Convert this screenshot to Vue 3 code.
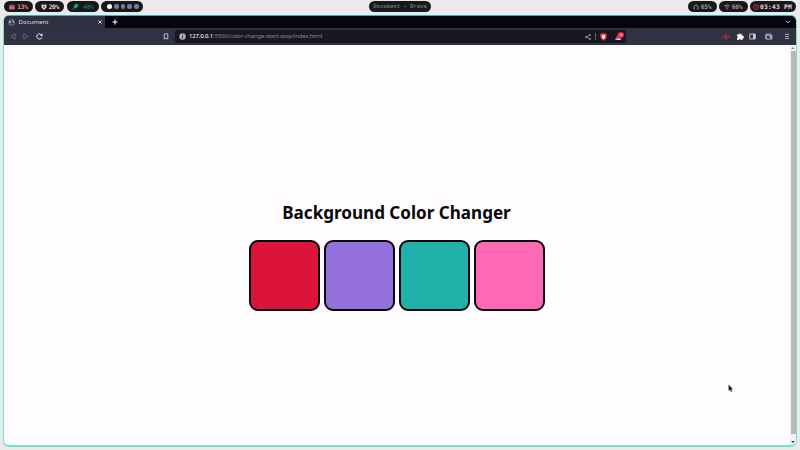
<script setup>
const boxes = ['crimson', 'mediumpurple', 'lightseagreen', 'hotpink']
</script>

<template>
  <div class="desktop">
    <header class="bar">
      <div class="group">
        <div class="pill cpu">
          <svg width="6" height="6" viewBox="0 0 6 6"><path d="M.3.8h5.2v4.4H.3z" fill="#94566c" /><path d="M.3 3l1.7-.8 2 1 1.5-.8v2.8H.3z" fill="#d9667e" /></svg>
          <span>13%</span>
        </div>
        <div class="pill mem">
          <svg width="6" height="6" viewBox="0 0 6 6"><path d="M.5.5h1.7l.8.8.8-.8h1.7v3L3 6 .5 3.5z" fill="#e8cfcb" /><circle cx="3" cy="2.8" r=".9" fill="#493a3c" /></svg>
          <span>20%</span>
        </div>
        <div class="pill power">
          <svg width="7" height="7" viewBox="0 0 7 7"><path d="M.4 6.6L2 5M2 2l3 3M2.5 2.4L4.5.8 6.3 2.6 4.6 4.6 2.6 5 2 4.3z" fill="#179c84" stroke="#179c84" stroke-width=".8" /></svg>
          <span>48%</span>
        </div>
        <div class="pill spaces"><i v-for="n in 5" :key="n" :class="{ on: n === 1 }"></i></div>
      </div>
      <div class="pill title"><span>Document - Brave</span></div>
      <div class="group right">
        <div class="pill vol">
          <svg width="6" height="6" viewBox="0 0 6 6"><path d="M1.9 5H1V3a2 2 0 0 1 4 0v2h-.9" fill="none" stroke="#86a5ae" stroke-width=".9" /></svg>
          <span>65%</span>
        </div>
        <div class="pill wifi">
          <svg width="6" height="6" viewBox="0 0 6 6"><path d="M.3 1.8Q3 0 5.7 1.8M1.4 3.2Q3 2 4.6 3.2" fill="none" stroke="#a78f94" stroke-width=".9" /><circle cx="3" cy="4.8" r=".7" fill="#a78f94" /></svg>
          <span>60%</span>
        </div>
        <div class="pill clock">
          <svg width="6" height="6" viewBox="0 0 6 6"><circle cx="3" cy="3" r="2.4" fill="none" stroke="#c23e62" stroke-width=".9" /><path d="M3 1.6V3l1 .7" fill="none" stroke="#c23e62" stroke-width=".7" /></svg>
          <span>03:43 PM</span>
        </div>
      </div>
    </header>

    <main class="window">
      <div class="tabs">
        <div class="tab">
          <svg width="7" height="7" viewBox="0 0 7 7"><circle cx="3.5" cy="3.5" r="2.8" fill="#252a37" stroke="#afb6c3" stroke-width=".7" /><path d="M1 2.2h2l.6 1.2-1.2 1-1.2-.9zM4 1l1.8 1L6 4.2 4.8 3.6z" fill="#afb6c3" /></svg>
          <span class="tab-name">Document</span>
          <svg class="close" width="4" height="4" viewBox="0 0 4 4"><path d="M.4.4l3.2 3.2m0-3.2L.4 3.6" stroke="#e5e6eb" stroke-width=".9" /></svg>
        </div>
        <svg class="plus" width="6" height="6" viewBox="0 0 6 6"><path d="M3 .5v5M.5 3h5" stroke="#fff" stroke-width="1.1" /></svg>
        <svg class="chev" width="6" height="4" viewBox="0 0 6 4"><path d="M1 .8l2 2 2-2" fill="none" stroke="#d9dae0" stroke-width="1" /></svg>
      </div>
      <div class="tools">
        <div class="nav">
          <svg width="6" height="7" viewBox="0 0 6 7"><path d="M5.2.8v5.4L.8 3.5z" fill="none" stroke="#6c6f7e" stroke-width=".8" /></svg>
          <svg width="6" height="7" viewBox="0 0 6 7"><path d="M.8.8v5.4l4.4-2.7z" fill="none" stroke="#6c6f7e" stroke-width=".8" /></svg>
          <svg width="7" height="7" viewBox="0 0 7 7"><path d="M5.9 4.2A2.6 2.6 0 1 1 5.2 1.6" fill="none" stroke="#e4e5ea" stroke-width="1" /><path d="M6.6.3v2.6H4z" fill="#e4e5ea" /></svg>
        </div>
        <svg class="mark" width="6" height="7" viewBox="0 0 6 7"><path d="M1.2 .9h3.6v5.3L3 5 1.2 6.2z" fill="none" stroke="#c8cad3" stroke-width=".9" /></svg>
        <div class="address">
          <svg width="7" height="7" viewBox="0 0 7 7"><circle cx="3.5" cy="3.5" r="3.2" fill="#aeb0b9" /><path d="M3.5 3v2.3M3.5 1.6v.8" stroke="#20212c" stroke-width=".9" /></svg>
          <p><b>127.0.0.1</b>:5500/color-change-start-stop/index.html</p>
          <svg class="share" width="6" height="6" viewBox="0 0 6 6"><path d="M5 1L1 3l4 2" fill="none" stroke="#a9aab4" stroke-width=".7" /><g fill="#d0d1d8"><circle cx="5" cy="1" r=".8" /><circle cx="1" cy="3" r=".8" /><circle cx="5" cy="5" r=".8" /></g></svg>
          <i class="divider"></i>
          <svg class="lion" width="7" height="8" viewBox="0 0 7 8"><path d="M1.6.3h3.8L6.8 1.8 6.2 5.4 3.5 7.8.8 5.4.2 1.8z" fill="#e94437" /><path d="M1.7 2l1.8.5L5.3 2l-.5 2 .1 1-1.4 1.1L2.1 5l.1-1z" fill="#fff0ea" /></svg>
          <svg class="bat" width="10" height="9" viewBox="0 0 10 9"><path d="M4.2 2L.7 8h3z" fill="#ec4836" /><path d="M4.2 2L7.7 8h-7L4.2 5.8z" fill="#8c559b" /><path d="M1.5 8h5.2L5.8 6.6H4z" fill="#ded7e5" /><circle cx="6.9" cy="3" r="3" fill="#e92a3c" /><path d="M5.4 2h1v1.8h-1M7.3 2h1v1.8h-1z" stroke="#ffd3d5" stroke-width=".5" fill="none" /></svg>
        </div>
        <div class="extensions">
          <svg width="8" height="6" viewBox="0 0 8 6"><path d="M.7 3Q4-.9 7.3 3 4 6.9.7 3z" fill="#542431" stroke="#b8363b" stroke-width=".8" /><circle cx="4" cy="3" r="1.1" fill="#d0363b" /></svg>
          <svg width="8" height="7" viewBox="0 0 8 7"><path d="M1 1.5h1.7a1.1 1.1 0 1 1 2.2 0h1.6v1.7a1.1 1.1 0 1 1 0 2.1V7H4.7a.9.9 0 0 0-1.8 0H1V5a.9.9 0 0 0 0-1.8z" fill="#f6f6f9" /></svg>
          <svg width="7" height="7" viewBox="0 0 7 7"><path d="M.8 1h5.4v5H.8z" fill="none" stroke="#ced0d8" stroke-width=".9" /><path d="M4 1h2.2v5H4z" fill="#ced0d8" /></svg>
          <svg width="8" height="7" viewBox="0 0 8 7"><path d="M1 5.9V1.1h4.8v1.2M1 2.3h5.9v3.8H1z" fill="none" stroke="#c0c2cb" stroke-width=".9" /><path d="M4.7 3.3h2.1v1.6H4.7z" fill="#c0c2cb" /></svg>
          <svg width="6" height="7" viewBox="0 0 6 7"><path d="M1 1.3h4M1 3.4h4M1 5.5h4" stroke="#b9bbc5" stroke-width=".9" /></svg>
        </div>
      </div>
      <div class="viewport">
        <section class="page">
          <h1>Background Color Changer</h1>
          <div class="boxes"><div v-for="color in boxes" :key="color" class="box" :style="{ background: color }"></div></div>
        </section>
        <div class="scroll">
          <svg width="6" height="6" viewBox="0 0 6 6"><path d="M1.2 4L3 2l1.8 2z" fill="#8a8a8c" /></svg>
          <i></i>
          <svg width="6" height="11" viewBox="0 0 6 11"><path d="M1 7l2 2 2-2z" fill="#3d3d40" /></svg>
        </div>
      </div>
    </main>
    <svg class="cursor" width="6" height="9" viewBox="0 0 6 9"><path d="M.7.7v6l1.3-1.1.9 2.2 1.1-.5-.9-2h1.7z" fill="#08080a" stroke="#77777b" stroke-width=".3" /></svg>
  </div>
</template>

<style>
body { margin: 0; overflow: hidden; }
</style>

<style scoped>
* { box-sizing: border-box; }
svg { display: block; flex: none; }
.desktop { position: relative; width: 800px; height: 450px; background: #ebe9e9; padding: 0 3px; font-family: "Noto Sans", sans-serif; }
.bar { height: 15px; padding: 1px 0 0 1px; display: grid; grid-template-columns: 365px 62px 1fr; align-items: start; }
.group { display: flex; gap: 2.3px; }
.right { justify-content: flex-end; padding-right: 1.5px; gap: 2px; }
.pill { height: 11px; border-radius: 6px; background: #19191b; display: flex; align-items: center; justify-content: center; gap: 2px; font: bold 6.2px/11px "DejaVu Sans Mono", monospace; letter-spacing: -.3px; white-space: nowrap; }
.cpu { width: 29px; color: #e38d92; }
.mem { width: 29px; color: #f0d0ca; }
.power { width: 32.5px; color: #16705f; gap: 4px; }
.spaces { width: 42px; gap: 2px; padding-left: 1px; }
.spaces i { width: 4.7px; height: 4.7px; border-radius: 50%; background: #7581a2; }
.spaces i.on { background: #fff; width: 5px; height: 5px; }
.title { width: 62px; color: #69696c; font-size: 5.7px; letter-spacing: -.08px; }
.vol { width: 29px; color: #82a4b3; }
.wifi { width: 29px; color: #aa9397; }
.clock { width: 46px; color: #e4dfe4; font-size: 6.2px; letter-spacing: .25px; gap: 1px; }
.window { width: 794px; height: 432px; border: 2px solid #70e5cc; border-top-color: #31b5bb; border-width: 1px 1.5px 2px; border-radius: 6px; overflow: hidden; background: #fefcff; }
.tabs { height: 12px; background: #05040f; display: flex; align-items: center; }
.tab { width: 101px; height: 12px; background: #2e3141; display: flex; align-items: center; padding: 0 3px 0 4px; border-radius: 4px 0 0; color: #dedfe5; }
.tab-name { margin-left: 3.5px; font-size: 6.1px; line-height: 12px; }
.close { margin-left: auto; }
.plus { margin-left: 7px; }
.chev { margin-left: auto; margin-right: 5px; }
.tools { height: 17px; background: #303242; display: flex; align-items: center; }
.nav { display: flex; gap: 7px; padding-left: 6px; width: 159px; }
.mark { margin-right: 6px; }
.address { width: 451px; height: 13px; background: #171722; border-radius: 2px; display: flex; align-items: center; padding: 0 2px 0 4px; }
.address p { margin: 0 0 0 3px; color: #858691; font-size: 6px; line-height: 13px; letter-spacing: -.17px; white-space: nowrap; }
.address b { color: #e9e9ee; font-weight: 500; }
.share { margin-left: auto; }
.divider { width: 1px; height: 7px; background: #62636e; margin: 0 4px; }
.bat { margin-left: 7px; }
.extensions { margin-left: auto; display: flex; align-items: center; gap: 5.5px; padding-right: 6px; }
.extensions svg:nth-child(n+4) { margin-left: 3px; }
.extensions svg:last-child { margin-left: 6px; }
.viewport { height: 400px; display: flex; }
.page { flex: 1; display: flex; flex-direction: column; align-items: center; padding-top: 154px; }
h1 { margin: 0; color: #08080a; font: bold 18px/26px "Noto Sans", sans-serif; white-space: nowrap; transform: scaleX(.948); }
.boxes { display: flex; gap: 4px; margin-top: 15px; }
.box { width: 71px; height: 71px; border: 2px solid #09080c; border-radius: 9px; }
.scroll { width: 6px; background: #f3f1f4; display: flex; flex-direction: column; align-items: center; }
.scroll i { width: 5px; flex: 1; background: #b8b8ba; }
.cursor { position: absolute; left: 728px; top: 384px; }
</style>
